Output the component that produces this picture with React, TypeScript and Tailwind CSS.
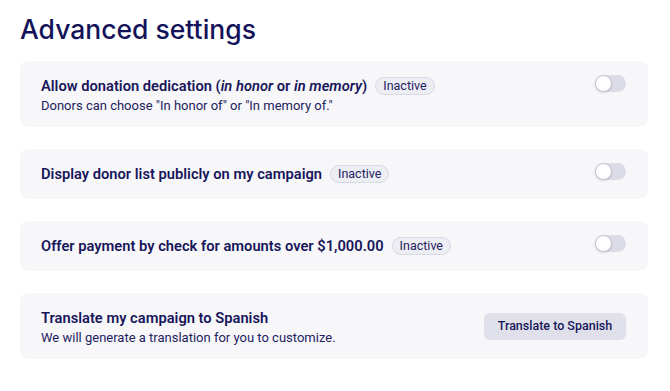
import type { ReactNode } from "react";

function Badge() {
  return (
    <span className="ml-2 inline-flex h-[18px] items-center rounded-full border border-[#d9d9e6] bg-[#ededf4] px-[7px] text-[12.5px] font-normal leading-none text-[#23225e]">
      Inactive
    </span>
  );
}

function Toggle() {
  return (
    <div className="flex h-[17px] w-[31px] shrink-0 items-center rounded-full bg-[#dcdce7]">
      <div className="h-[17px] w-[17px] rounded-full border border-[#c2c2ce] bg-white shadow-sm" />
    </div>
  );
}

function Card({
  title,
  sub,
  right,
  center,
}: {
  title: ReactNode;
  sub?: string;
  right: ReactNode;
  center?: boolean;
}) {
  return (
    <div
      className={`flex justify-between rounded-lg bg-[#f7f7fa] pl-[21px] pr-[22px] py-[13px] ${
        center ? "items-center" : "items-start"
      }`}
    >
      <div>
        <div className="flex items-center text-[14.7px] font-semibold leading-[24px] text-[#17165a]">
          {title}
          {!center && <Badge />}
        </div>
        {sub && (
          <div className="text-[13px] leading-[16px] text-[#23225e]">{sub}</div>
        )}
      </div>
      <div className={center ? "" : "mt-[1px]"}>{right}</div>
    </div>
  );
}

export default function App() {
  return (
    <div className="min-h-screen bg-white px-5 pt-[10px] font-['Roboto',sans-serif]">
      <h1 className="font-['Inter',sans-serif] text-[26.5px] font-medium leading-[38px] text-[#14135a]">
        Advanced settings
      </h1>
      <div className="mt-[13px] flex w-[628px] flex-col gap-[22px]">
        <Card
          title={
            <span>
              Allow donation dedication (<i>in honor</i> or <i>in memory</i>)
            </span>
          }
          sub={'Donors can choose "In honor of" or "In memory of."'}
          right={<Toggle />}
        />
        <Card title="Display donor list publicly on my campaign" right={<Toggle />} />
        <Card
          title="Offer payment by check for amounts over $1,000.00"
          right={<Toggle />}
        />
        <Card
          center
          title="Translate my campaign to Spanish"
          sub="We will generate a translation for you to customize."
          right={
            <button className="h-[27px] w-[142px] rounded-md bg-[#e0e0ea] text-[12.5px] font-medium text-[#17165a]">
              Translate to Spanish
            </button>
          }
        />
      </div>
    </div>
  );
}
